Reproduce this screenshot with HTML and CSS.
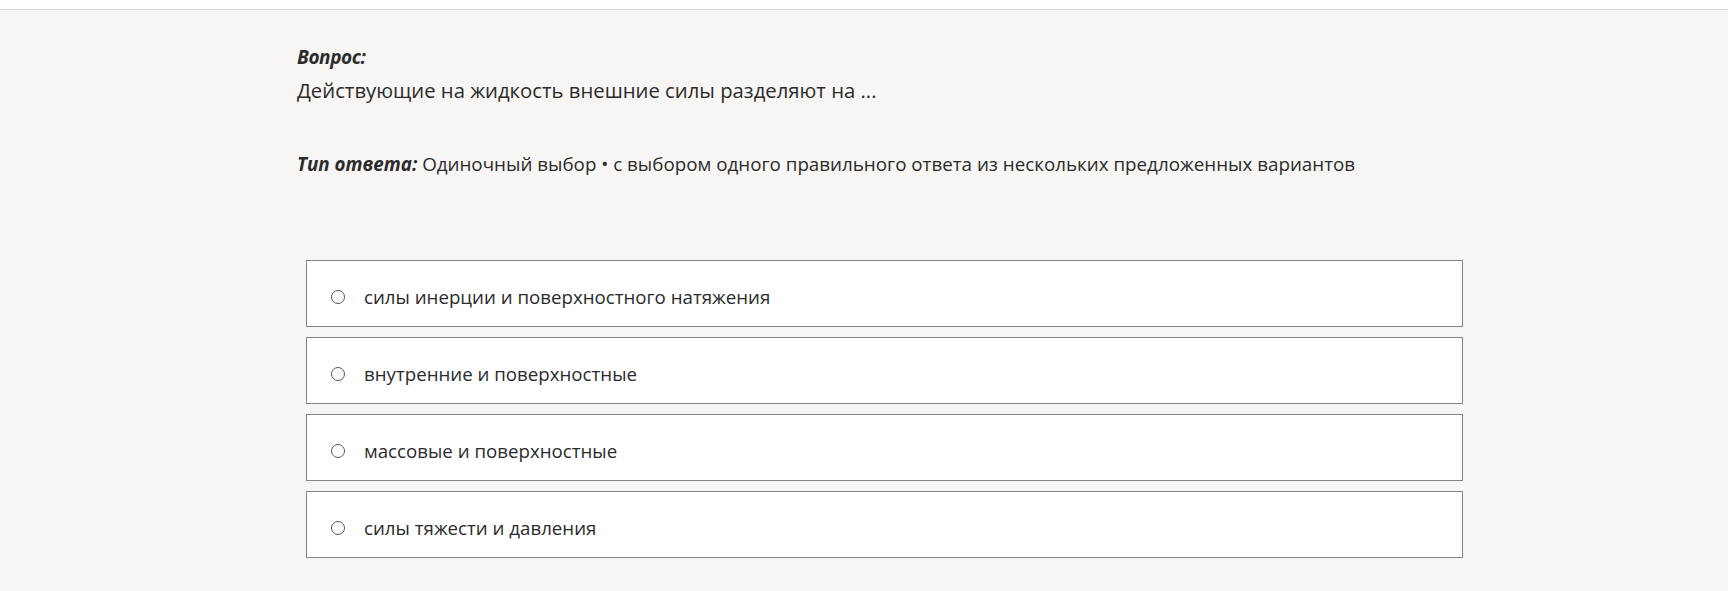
FILE: index.html
```html
<!DOCTYPE html>
<html lang="ru">
<head>
<meta charset="utf-8">
<title>Вопрос</title>
<link rel="stylesheet" href="styles.css">
</head>
<body>
<div class="topbar"></div>
<main class="main">
  <div class="question">
    <div class="label">Вопрос:</div>
    <div class="qtext">Действующие на жидкость внешние силы разделяют на ...</div>
  </div>
  <div class="type"><span class="label-inline">Тип ответа:</span> Одиночный выбор • с выбором одного правильного ответа из нескольких предложенных вариантов</div>
  <ul class="answers">
    <li class="answer"><span class="radio"></span><span class="atext">силы инерции и поверхностного натяжения</span></li>
    <li class="answer"><span class="radio"></span><span class="atext">внутренние и поверхностные</span></li>
    <li class="answer"><span class="radio"></span><span class="atext">массовые и поверхностные</span></li>
    <li class="answer"><span class="radio"></span><span class="atext">силы тяжести и давления</span></li>
  </ul>
</main>
</body>
</html>
```
FILE: styles.css
```css
html, body {
  margin: 0;
  padding: 0;
}
body {
  background: #f7f6f4;
  font-family: "Open Sans", "Noto Sans", sans-serif;
  color: #2b2b2b;
  height: 591px;
  overflow: hidden;
}
.topbar {
  height: 9px;
  background: #ffffff;
  border-bottom: 1px solid #d9d9d9;
}
.main {
  padding: 34px 0 0 297px;
}
.label {
  font-size: 19px;
  line-height: 26px;
  font-weight: 700;
  font-style: italic;
  letter-spacing: -0.4px;
}
.qtext {
  margin-top: 6px;
  font-size: 20.3px;
  line-height: 28px;
}
.type {
  margin-top: 47px;
  font-size: 18.8px;
  line-height: 26px;
}
.label-inline {
  font-weight: 700;
  font-style: italic;
}
.answers {
  list-style: none;
  margin: 83px 0 0 9px;
  padding: 0;
  width: 1157px;
  display: flex;
  flex-direction: column;
  gap: 10px;
}
.answer {
  box-sizing: border-box;
  height: 67px;
  background: #ffffff;
  border: 1px solid #858585;
  display: flex;
  align-items: center;
  padding: 6px 0 0 24px;
}
.radio {
  box-sizing: border-box;
  width: 14px;
  height: 14px;
  border: 1.3px solid #555555;
  border-radius: 50%;
  background: #fff;
  flex: none;
}
.atext {
  margin-left: 19px;
  font-size: 18.7px;
  line-height: 26px;
}
```
